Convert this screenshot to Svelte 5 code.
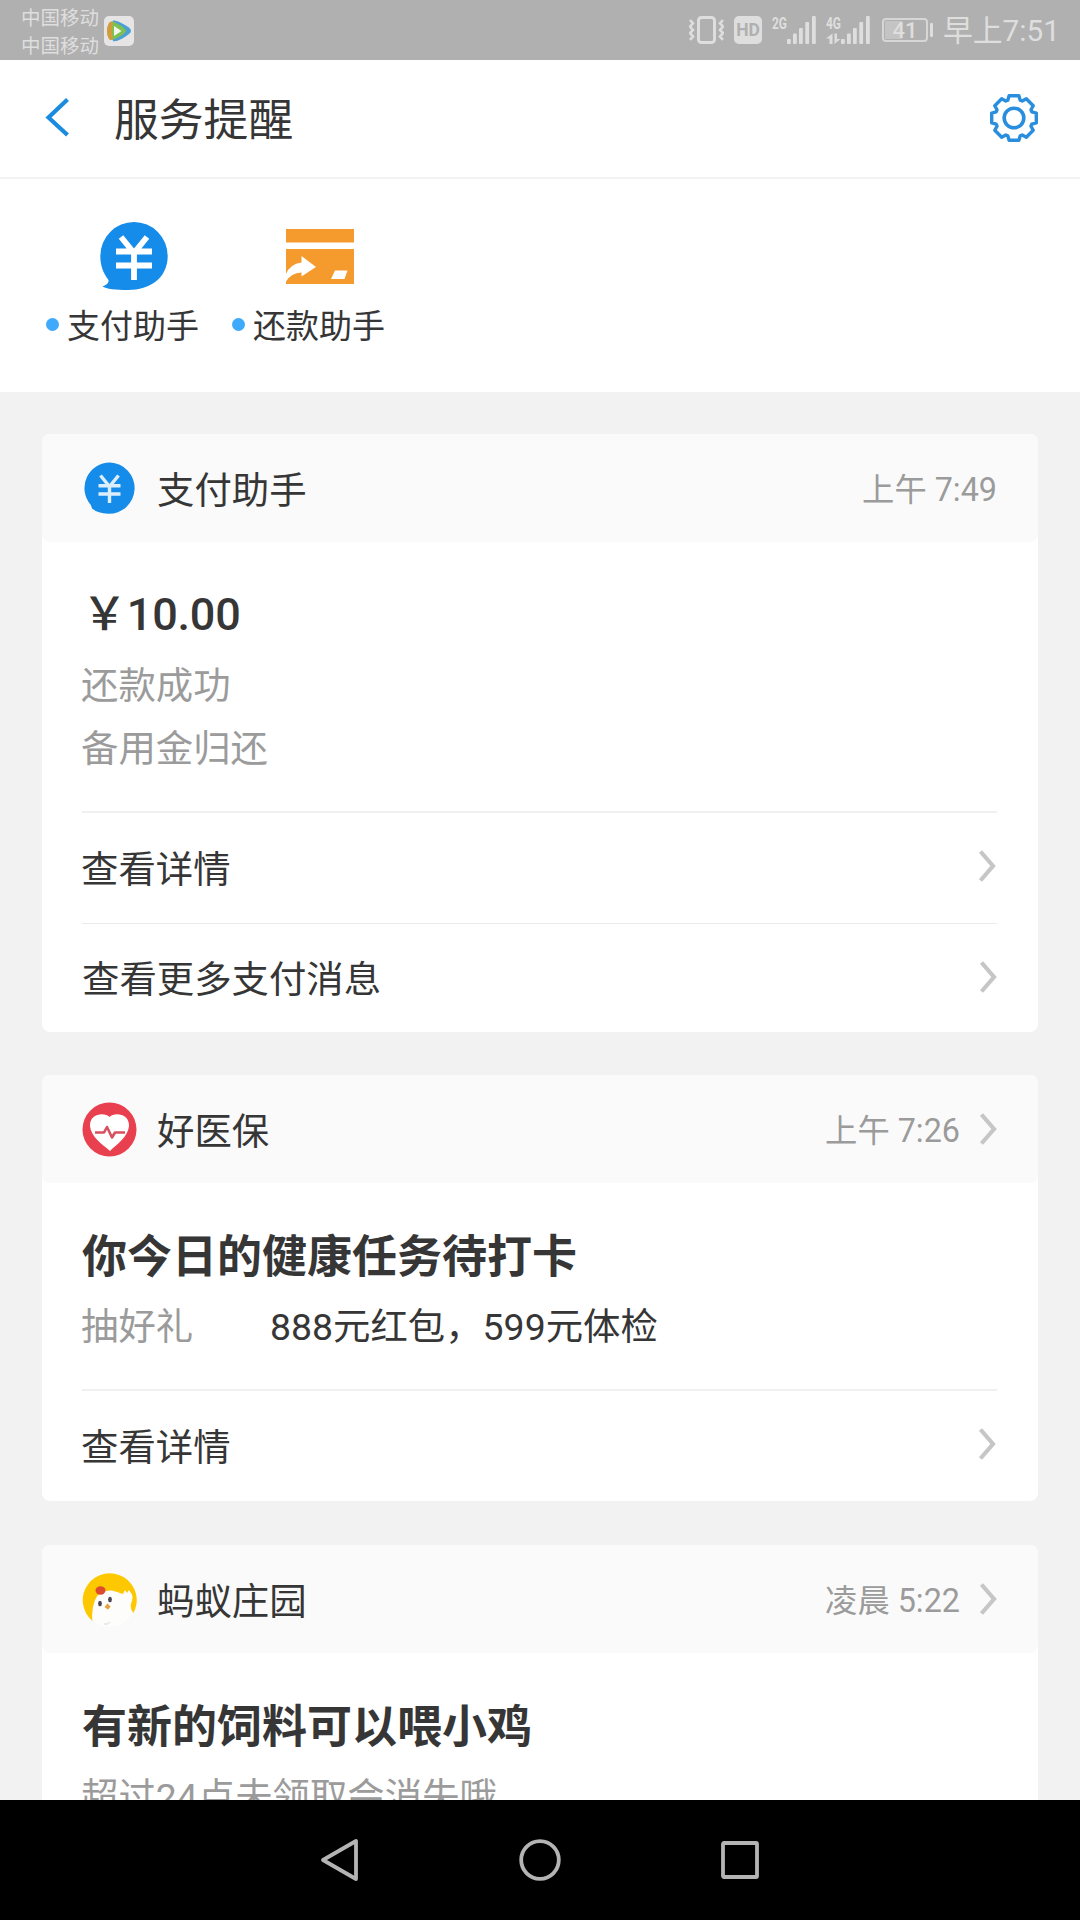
<script>
  const shortcuts = [
    { icon: 'pay', label: '支付助手' },
    { icon: 'card', label: '还款助手' },
  ];

  const cards = [
    {
      icon: 'pay',
      name: '支付助手',
      time: '上午 7:49',
      link: false,
      heading: '￥10.00',
      amount: true,
      lines: [{ label: '还款成功' }, { label: '备用金归还' }],
      actions: ['查看详情', '查看更多支付消息'],
    },
    {
      icon: 'heart',
      name: '好医保',
      time: '上午 7:26',
      link: true,
      heading: '你今日的健康任务待打卡',
      lines: [{ label: '抽好礼', value: '888元红包，599元体检' }],
      actions: ['查看详情'],
    },
    {
      icon: 'chick',
      name: '蚂蚁庄园',
      time: '凌晨 5:22',
      link: true,
      heading: '有新的饲料可以喂小鸡',
      lines: [{ label: '超过24点未领取会消失哦' }],
      actions: [],
    },
  ];

  // Outline of an eight-toothed gear centred on the origin
  function gearPath() {
    const tooth = [[-6.2, -17.8], [-4.9, -22.3], [4.9, -22.3], [6.2, -17.8]];
    const pts = [];
    for (let k = 0; k < 8; k++) {
      const a = (k * Math.PI) / 4;
      for (const [x, y] of tooth) {
        pts.push(
          (x * Math.cos(a) - y * Math.sin(a)).toFixed(2) + ' ' +
          (x * Math.sin(a) + y * Math.cos(a)).toFixed(2)
        );
      }
    }
    return 'M' + pts.join('L') + 'Z';
  }
  const gear = gearPath();
</script>

{#snippet chevron()}
  <svg class="chevron" width="18" height="34" viewBox="0 0 18 34">
    <path d="M2.500 2.500 L15 17 L2.500 31.500" fill="none" stroke="#c6c6c6" stroke-width="4.200" />
  </svg>
{/snippet}

{#snippet signal()}
  <rect x="0" y="23" width="3.8" height="5" rx="1" />
  <rect x="6" y="17.500" width="3.8" height="10.500" rx="1" />
  <rect x="12" y="12" width="3.8" height="16" rx="1" />
  <rect x="18.300" y="6" width="3.8" height="22" rx="1" />
  <rect x="25" y="0" width="3.8" height="28" rx="1" />
{/snippet}

<div class="screen">
  <div class="status">
    <div class="carriers"><span>中国移动</span><span>中国移动</span></div>
    <svg class="app" width="30" height="30" viewBox="0 0 30 30">
      <rect width="30" height="30" rx="5" fill="#e6e4e4" />
      <path d="M9 4.500 Q13 3.500 25 11.500 Q29 15 25 18 Q14 26.500 9 25 Q5 15 9 4.500Z" fill="#4a9fd4" />
      <path d="M5 7 Q8 4 13 7.500 Q22 12 22 15 Q21 18 13 22 Q7 25 5 23 Q1 15 5 7Z" fill="#7fc052" />
      <path d="M5 7 Q7 5 9 6 Q6.500 15 9 23.500 Q6.500 24.500 5 23 Q1 15 5 7Z" fill="#d59a3c" />
      <path d="M10 10 L17.500 15 L10 20Z" fill="#f4f6ec" />
    </svg>
    <div class="spacer"></div>
    <svg class="vibrate" width="35" height="28" viewBox="0 0 35 28">
      <rect x="9.500" y="1.500" width="16" height="25" rx="3" fill="none" stroke="#dedede" stroke-width="3" />
      <path d="M1 4 l3 3.300 l-3 3.300 l3 3.300 l-3 3.300 l3 3.300 l-3 3.300 M34 4 l-3 3.300 l3 3.300 l-3 3.300 l3 3.300 l-3 3.300 l3 3.300" fill="none" stroke="#dedede" stroke-width="2.600" />
    </svg>
    <span class="hd">HD</span>
    <svg class="net2" width="44" height="36" viewBox="0 -4 44 36" fill="#dedede">
      <text x="0" y="12.500" class="gen" textLength="15" lengthAdjust="spacingAndGlyphs">2G</text>
      <g transform="translate(15 0)">{@render signal()}</g>
    </svg>
    <svg class="net4" width="44" height="36" viewBox="0 -4 44 36" fill="#dedede">
      <text x="0" y="12.500" class="gen" textLength="15" lengthAdjust="spacingAndGlyphs">4G</text>
      <path d="M3.500 28 V22.500 H0 L6.500 17.500 V28Z M8.500 17.500 H11 V23 H14.500 L8.500 28Z" />
      <g transform="translate(15 0)">{@render signal()}</g>
    </svg>
    <div class="battery"><div class="cell"><i></i><b>41</b></div><div class="cap"></div></div>
    <span class="clock">早上7:51</span>
  </div>

  <header class="bar">
    <svg class="back" width="26" height="42" viewBox="0 0 26 42">
      <path d="M23.500 2.500 L4.500 20.500 L23.500 38" fill="none" stroke="#1b8be0" stroke-width="4.200" />
    </svg>
    <h1>服务提醒</h1>
    <svg class="gear" width="50" height="50" viewBox="-25 -25 50 50" fill="none" stroke="#2a8ede" stroke-width="3.400" stroke-linejoin="round">
      <path d={gear} />
      <circle r="9.800" stroke-width="3.600" />
    </svg>
  </header>

  <section class="shortcuts">
    {#each shortcuts as s}
      <div class="shortcut">
        {#if s.icon === 'pay'}
          <svg width="68" height="68" viewBox="0 0 68 68">
            <path d="M34 0 A33.700 34 0 0 1 67.700 34 C67.700 56 50 68 28 68 C16 68 6 67 2.500 64.500 C7 63 9 60.500 8.500 58 C3 51 0.300 43 0.300 34 A33.700 34 0 0 1 34 0Z" fill="#168cea" />
            <path d="M21 15 L34 31 L47 15 M34 29 V58 M16 29.500 H52 M16 43.500 H52" fill="none" stroke="#fff" stroke-width="5.800" />
          </svg>
        {:else}
          <svg width="68" height="68" viewBox="0 0 68 68">
            <path d="M0 7 H68 V20.500 H0Z M0 27 H68 V62 H0Z" fill="#f59a2c" />
            <path d="M0 59.500 Q5 51 15.500 50.500 V54.500 L30 45 L15.500 34 V40.500 Q4 42 0 52Z" fill="#fff" />
            <path d="M49 48.500 H61.500 L58.500 57 H45Z" fill="#fff" />
          </svg>
        {/if}
        <div class="label"><i></i><span>{s.label}</span></div>
      </div>
    {/each}
  </section>

  <main>
    {#each cards as card}
      <article class="card">
        <div class="head">
          <svg class="avatar" width="55" height="55" viewBox="0 0 55 55">
            {#if card.icon === 'pay'}
              <path d="M28 1.500 A25.500 25.500 0 1 1 26 52.700 Q16 52.500 10 47.500 Q9.500 45.500 8.500 43.500 A25.500 25.500 0 0 1 28 1.500Z" fill="#168cea" />
              <path d="M18.500 14.500 L27.500 25.500 L36.500 14.500 M27.500 24 V42 M16.500 24.800 H38.500 M16.500 33 H38.500" fill="none" stroke="#dceefc" stroke-width="3.400" />
            {:else if card.icon === 'heart'}
              <circle cx="27.500" cy="27.500" r="27" fill="#e9404f" />
              <path d="M27.500 15 C32 10 47.500 11 47 24 C46 35 35 42 28 49 C20 42 9 35 8 24 C7.500 11 23 10 27.500 15Z" fill="#fff" />
              <path d="M13 30.500 H22 L25 25 L30 35.500 L33 30.500 H43" fill="none" stroke="#d8505f" stroke-width="2.600" stroke-linejoin="round" />
            {:else}
              <circle cx="27.500" cy="27.500" r="27" fill="#fdfdfb" />
              <path d="M10.500 49 A27 27 0 1 1 51.500 41 Q48 38 49 32 Q52 24 49 21 L47 18 L45 21 L43 18 L41 22 Q36 20 30 18.500 Q17 18 13 28 Q9 38 10.500 49Z" fill="#fdc800" />
              <ellipse cx="18.500" cy="18.500" rx="5" ry="4.200" fill="#dd4a2e" />
              <ellipse cx="18" cy="31.500" rx="1.900" ry="2.700" fill="#4c4552" />
              <ellipse cx="28" cy="27.500" rx="1.900" ry="2.700" fill="#4c4552" />
              <path d="M22.500 35 L25.500 31.500 L28.500 34.500 L26 37.800Z" fill="#e6a23a" />
              <path d="M22 52 Q26 53 28 50" fill="none" stroke="#d9d9d9" stroke-width="1" />
            {/if}
          </svg>
          <span class="name">{card.name}</span>
          <span class="time">{card.time}</span>
          {#if card.link}{@render chevron()}{/if}
        </div>
        <div class="body">
          <h2 class:amount={card.amount}>{card.heading}</h2>
          {#each card.lines as line}
            <p><span class="key">{line.label}</span>{#if line.value}<span>{line.value}</span>{/if}</p>
          {/each}
        </div>
        {#if card.actions.length}
          <div class="actions">
            {#each card.actions as action}
              <div class="action"><span>{action}</span>{@render chevron()}</div>
            {/each}
          </div>
        {/if}
      </article>
    {/each}
  </main>

  <nav>
    <svg width="44" height="44" viewBox="0 0 44 44"><path d="M38 3 V41 L5 22Z" /></svg>
    <svg width="44" height="44" viewBox="0 0 44 44"><circle cx="22" cy="22" r="18.800" /></svg>
    <svg width="44" height="44" viewBox="0 0 44 44"><rect x="5" y="5" width="34" height="34" rx="1" /></svg>
  </nav>
</div>

<style>
  :global(body) {
    background: #f2f2f2;
  }

  .screen {
    display: flex;
    flex-direction: column;
    width: 1080px;
    height: 1920px;
    overflow: hidden;
    background: #f2f2f2;
    color: #363636;
    font-family: Roboto, 'Noto Sans CJK SC', sans-serif;
  }

  svg {
    display: block;
    flex: none;
  }

  h1, h2, p {
    margin: 0;
    white-space: nowrap;
  }

  .status {
    display: flex;
    align-items: center;
    flex: none;
    box-sizing: border-box;
    height: 60px;
    padding: 0 20px;
    background: #b0b0b0;
    color: #dedede;
  }

  .carriers {
    display: flex;
    flex-direction: column;
    width: 83px;
    padding: 5px 0 0 1px;
    font-size: 19.5px;
    line-height: 28px;
  }

  .app {
    margin-top: 2px;
  }

  .spacer {
    flex: 1;
  }

  .vibrate {
    margin-right: 10px;
  }

  .hd {
    width: 28px;
    height: 28px;
    margin-right: 10px;
    border-radius: 5px;
    background: #dedede;
    color: #b0b0b0;
    font-size: 17.5px;
    font-weight: 700;
    line-height: 29px;
    text-align: center;
  }

  .gen {
    font-size: 16.5px;
    font-weight: 700;
  }

  .net2 {
    margin-right: 10px;
  }

  .net4 {
    margin-right: 12px;
  }

  .battery {
    display: flex;
    align-items: center;
    width: 52px;
    margin-right: 9px;
  }

  .cell {
    position: relative;
    box-sizing: border-box;
    flex: none;
    width: 46px;
    height: 24px;
    border: 2px solid #d6d6d6;
    border-radius: 4px;
    text-align: center;
  }

  .cell i {
    position: absolute;
    left: 1px;
    top: 1px;
    width: 17px;
    height: 18px;
    background: #c4c4c4;
  }

  .cell b {
    position: relative;
    display: block;
    font-size: 22px;
    font-weight: 500;
    line-height: 21px;
  }

  .cap {
    width: 3px;
    height: 14px;
    margin-left: 2px;
    border-radius: 1px;
    background: #dedede;
  }

  .clock {
    width: 117px;
    font-size: 29.8px;
    font-weight: 400;
    line-height: 60px;
    padding-top: 1px;
    white-space: nowrap;
  }

  .bar {
    display: flex;
    align-items: center;
    flex: none;
    box-sizing: border-box;
    height: 119px;
    padding: 0 41px 0 44px;
    border-bottom: 2px solid #f2f2f2;
    background: #fff;
  }

  .back,
  .gear {
    margin-top: -1px;
  }

  h1 {
    flex: 1;
    padding: 5px 0 0 44px;
    font-size: 44.8px;
    font-weight: 400;
    line-height: 60px;
  }

  .shortcuts {
    display: flex;
    flex: none;
    box-sizing: border-box;
    height: 213px;
    padding: 43px 0 0 46px;
    background: #fff;
  }

  .shortcut {
    width: 186px;
  }

  .shortcut > svg {
    margin-left: 53.5px;
  }

  .label {
    display: flex;
    align-items: center;
    gap: 8px;
    margin-top: 17px;
    font-size: 33px;
    line-height: 40px;
  }

  .label i {
    width: 13px;
    height: 13px;
    margin-top: -6px;
    border-radius: 50%;
    background: #3fa9fb;
  }

  main {
    display: flex;
    flex-direction: column;
    flex: 1;
    gap: 43px;
    min-height: 0;
    overflow: hidden;
    padding: 42px 42px 0;
  }

  .card {
    flex: none;
    border-radius: 8px;
    background: #fff;
  }

  .card:last-child {
    margin-top: 1px;
  }

  .head {
    display: flex;
    align-items: center;
    height: 108px;
    padding: 0 41px 0 40px;
    border-radius: 8px;
    background: #fafafa;
  }

  .name {
    flex: 1;
    padding: 6px 0 0 20px;
    font-size: 37.4px;
    line-height: 50px;
  }

  .time {
    padding-top: 4px;
    color: #9b9b9b;
    font-size: 32.3px;
    line-height: 50px;
  }

  .time + .chevron {
    margin-left: 19px;
  }

  .body {
    padding: 33px 40px 0;
  }

  h2 {
    height: 80px;
    font-size: 45px;
    font-weight: 700;
    line-height: 83px;
  }

  .amount {
    font-weight: 500;
    line-height: 79px;
    letter-spacing: -0.2px;
  }

  p {
    display: flex;
    height: 63px;
    font-size: 37.4px;
    line-height: 63px;
  }

  .key {
    min-width: 188px;
    margin-left: -1px;
    padding-right: 1px;
    color: #9b9b9b;
  }

  .actions {
    margin: 30px 41px 0 40px;
    border-top: 2px solid #f0f0f0;
  }

  .action {
    display: flex;
    align-items: center;
    justify-content: space-between;
    height: 110px;
    font-size: 37.4px;
    line-height: 50px;
  }

  .action span {
    padding-top: 4px;
  }

  .action:first-child span {
    margin-left: -1px;
  }

  .action .chevron {
    margin: -4px 1px 0 0;
  }

  .action + .action {
    height: 108px;
    border-top: 1px solid #ebebeb;
  }

  .action + .action .chevron {
    margin: -3px 0 0;
  }

  nav {
    display: flex;
    align-items: center;
    justify-content: center;
    gap: 156px;
    flex: none;
    height: 120px;
    background: #000;
  }

  nav svg {
    fill: none;
    stroke: #b4b4b4;
    stroke-width: 3.8px;
    stroke-linejoin: round;
  }
</style>
